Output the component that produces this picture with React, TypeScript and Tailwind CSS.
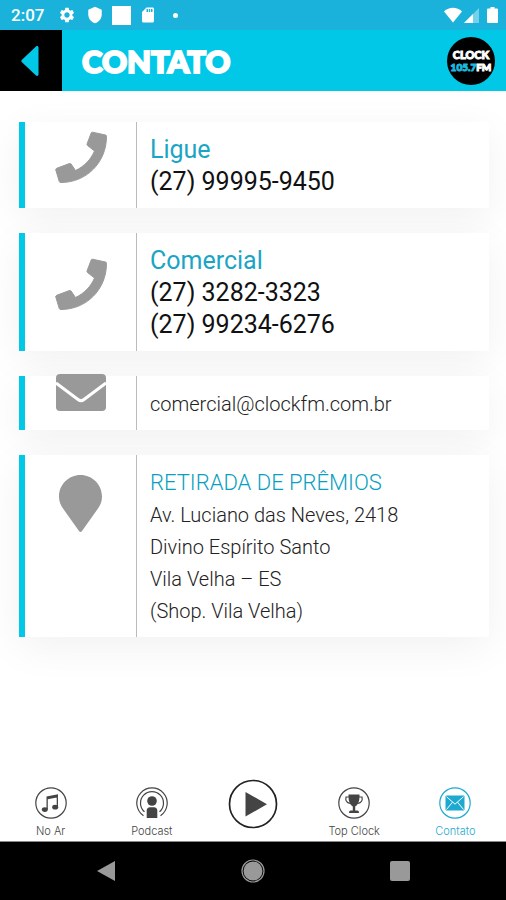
import type { ReactNode } from "react";
import { MdSdCard, MdSettings, MdShield } from "react-icons/md";

const StatusBar = () => (
  <div className="flex h-[30px] items-center justify-between bg-[#1ab2da] pr-2 pl-[11px] text-white">
    <div className="flex items-center">
      <span className="w-[47px] text-[17px] leading-5 font-medium">2:07</span>
      <MdSettings className="mr-2.5 size-[18px]" />
      <MdShield className="mr-2 size-[18px]" />
      <span className="mr-2 size-[19px] bg-white" />
      <MdSdCard className="mr-4 size-[18px]" />
      <span className="size-[5px] rounded-full bg-white" />
    </div>
    <div className="flex items-center">
      <svg className="mr-0.5 h-4 w-[18px]" viewBox="0 0 18 16" fill="currentColor">
        <path d="M0 4.500C5 -.5 13 -.5 18 4.500L9 15.500z" />
      </svg>
      <svg className="mr-2 size-[15px]" viewBox="0 0 15 15" fill="currentColor">
        <path d="M15 0V15H0z" opacity=".4" />
        <path d="M9 6V15H0z" />
      </svg>
      <svg className="h-4 w-[11px]" viewBox="0 0 11 16" fill="currentColor">
        <path d="M3.500 0h4v1.600H10a1 1 0 0 1 1 1V15a1 1 0 0 1-1 1H1a1 1 0 0 1-1-1V2.600a1 1 0 0 1 1-1h2.500z" />
      </svg>
    </div>
  </div>
);

const Logo = () => (
  <div className="flex size-12 flex-col items-center justify-center rounded-full bg-black font-[Lato,sans-serif] font-black text-white">
    <span className="text-[11px] leading-3 [-webkit-text-stroke:1px]">CLOCK</span>
    <span className="flex text-[10px] leading-3 [-webkit-text-stroke:1px]">
      <span className="text-[#1bb8dc]">105.7</span>
      <span>FM</span>
    </span>
  </div>
);

const Header = () => (
  <header className="flex h-[61px] items-center bg-[#02c8e8] pr-[11px]">
    <button
      aria-label="Voltar"
      className="flex h-full w-[62px] items-center justify-center bg-black text-[#02c8e8]"
    >
      <svg className="h-8 w-5" viewBox="0 0 20 32" fill="currentColor">
        <path d="M1 14.700L15 1.500c1-1 2.500-.3 2.500 1.200v26.600c0 1.500-1.500 2.200-2.500 1.200L1 17.300c-.9-.8-.9-1.800 0-2.600z" />
      </svg>
    </button>
    <h1 className="flex-1 pl-5 font-[Lato,sans-serif] text-[31px] leading-8 font-black text-white [-webkit-text-stroke:2px]">
      CONTATO
    </h1>
    <Logo />
  </header>
);

const PhoneIcon = () => (
  <svg
    className="size-[52px]"
    viewBox="0 0 52 52"
    fill="currentColor"
    stroke="currentColor"
    strokeWidth="1"
    strokeLinejoin="round"
  >
    <path d="M37.500 1.200L50.500 4q1 .2 1 1.300C51.500 32 31 51.500 6 51.500q-1.500 0-1.800-1.200L.8 39q-.3-1.200.9-1.700L14.500 32.500q1-.4 1.600.5L20.500 39.500C29 35.500 36 28.500 39.500 20L32.500 14.500q-.8-.7-.4-1.700L36.200 2q.4-1 1.300-.8z" />
  </svg>
);

const EnvelopeIcon = () => (
  <svg className="h-[37px] w-[50px] overflow-visible" viewBox="0 3 50 37">
    <rect width="50" height="37" rx="4" fill="currentColor" />
    <path
      d="M0 9L22 25.500q3 2.400 6 0L50 9"
      fill="none"
      stroke="#fff"
      strokeWidth="3"
    />
  </svg>
);

const PinIcon = () => (
  <svg className="h-[57px] w-[43px]" viewBox="0 0 43 57" fill="currentColor">
    <path d="M21.500 0C33.400 0 43 9.600 43 21.500c0 5-1.500 8.500-4 12L23 56q-1.500 2-3 0L4 33.500c-2.500-3.500-4-7-4-12C0 9.600 9.600 0 21.500 0z" />
  </svg>
);

type CardProps = {
  icon: ReactNode;
  top?: boolean;
  children: ReactNode;
};

const Card = ({ icon, top, children }: CardProps) => (
  <section className="flex border-l-6 border-[#02c8e8] bg-white">
    <div
      className={
        top
          ? "flex w-[112px] justify-center border-r border-[#bbb] pt-5 text-[#999]"
          : "flex w-[112px] items-center justify-center border-r border-[#bbb] pb-4 text-[#999]"
      }
    >
      {icon}
    </div>
    <div className="flex-1 pt-3 pb-2.5 pl-[13px] leading-8">{children}</div>
  </section>
);

const Shadow = ({ children }: { children: ReactNode }) => (
  <div className="shadow-[0_10px_40px_rgba(0,0,0,0.06)]">{children}</div>
);

const TabItem = ({
  label,
  active,
  children,
}: {
  label: string;
  active?: boolean;
  children: ReactNode;
}) => (
  <button
    className={
      active
        ? "flex flex-col items-center text-[#1ea9d0]"
        : "flex flex-col items-center text-[#444]"
    }
  >
    <svg className="size-8" viewBox="0 0 32 32" fill="currentColor">
      {children}
    </svg>
    <span className="mt-1 font-[Inter,sans-serif] text-[11px] leading-4 font-light">
      {label}
    </span>
  </button>
);

const Ring = () => (
  <circle cx="16" cy="16" r="15.200" fill="none" stroke="currentColor" strokeWidth="1.200" />
);

const TabBar = () => (
  <nav className="grid grid-cols-5 items-end border-b border-[#888] pb-0.5">
    <TabItem label="No Ar">
      <Ring />
      <path d="M11.500 9.500L23 7.200v3L12.800 12.300v10.200h-1.300zM21.700 8.500H23v11.500h-1.300z" />
      <ellipse cx="9.800" cy="22.600" rx="3" ry="2.400" />
      <ellipse cx="20.200" cy="20.200" rx="3" ry="2.400" />
    </TabItem>
    <TabItem label="Podcast">
      <g fill="none" stroke="currentColor" strokeWidth="1.200">
        <path d="M7.500 28.700A15.200 15.200 0 1 1 24.500 28.700" />
        <path d="M8.500 24.800A11.500 11.500 0 1 1 23.500 24.800" />
      </g>
      <circle cx="16" cy="14" r="4.800" />
      <path d="M10.700 31v-7.500c0-2 1.200-3.300 3.300-3.300h4c2.100 0 3.300 1.300 3.300 3.300V31z" />
    </TabItem>
    <button aria-label="Tocar" className="mb-2.5 flex justify-center text-[#222]">
      <svg className="size-[50px]" viewBox="0 0 50 50">
        <circle cx="25" cy="25" r="23.500" fill="none" stroke="currentColor" strokeWidth="1.700" />
        <path d="M17.500 13v24.500L39 25.200z" fill="#444" />
      </svg>
    </button>
    <TabItem label="Top Clock">
      <Ring />
      <path d="M10.500 7.500h11v2c0 5-1.500 8.500-4.300 10v4h2.300c1 0 1.500 1 1.500 2.500H11c0-1.500.5-2.500 1.500-2.500h2.300v-4c-2.800-1.500-4.300-5-4.300-10z" />
      <path
        d="M11 10H8c-1 4 1.500 6 4.500 6.500M21 10h3c1 4-1.500 6-4.500 6.500"
        fill="none"
        stroke="currentColor"
        strokeWidth="1.200"
      />
    </TabItem>
    <TabItem label="Contato" active>
      <Ring />
      <rect x="6.500" y="8.500" width="19" height="15" rx="1" />
      <path
        d="M7.500 9.700L16 17.200l8.500-7.500M7.500 22.500l6-7.300M24.500 22.500l-6-7.300"
        fill="none"
        stroke="#fff"
        strokeWidth="1"
      />
    </TabItem>
  </nav>
);

const SystemBar = () => (
  <div className="flex h-[58px] items-center justify-between bg-black px-[82px] text-[#999]">
    <button aria-label="Voltar ao app anterior" className="flex w-12 justify-center">
      <svg className="size-5" viewBox="0 0 20 20" fill="currentColor">
        <path d="M19 0v20L1 10z" />
      </svg>
    </button>
    <button aria-label="Início" className="flex w-12 justify-center">
      <svg className="size-6" viewBox="0 0 24 24">
        <circle cx="12" cy="12" r="9.500" fill="currentColor" />
        <circle cx="12" cy="12" r="11" fill="none" stroke="currentColor" strokeWidth="1.200" />
      </svg>
    </button>
    <button aria-label="Recentes" className="flex w-12 justify-center">
      <span className="size-5 rounded-xs bg-[#999]" />
    </button>
  </div>
);

export default function App() {
  return (
    <div className="flex min-h-screen flex-col bg-white font-[Roboto,sans-serif]">
      <StatusBar />
      <Header />
      <main className="flex flex-1 flex-col gap-[25px] pt-[31px] pr-[17px] pl-[19px]">
        <Shadow>
          <Card icon={<PhoneIcon />}>
            <h2 className="text-[25px] leading-8 text-[#1ba5c4]">Ligue</h2>
            <a href="tel:27999959450" className="block text-[25px] leading-8 text-[#111]">
              (27) 99995-9450
            </a>
          </Card>
        </Shadow>
        <Shadow>
          <Card icon={<PhoneIcon />}>
            <h2 className="text-[25px] leading-8 text-[#1ba5c4]">Comercial</h2>
            <a href="tel:2732823323" className="block text-[25px] leading-8 text-[#111]">
              (27) 3282-3323
            </a>
            <a href="tel:27992346276" className="block text-[25px] leading-8 text-[#111]">
              (27) 99234-6276
            </a>
          </Card>
        </Shadow>
        <Shadow>
          <Card icon={<EnvelopeIcon />}>
            <a
              href="mailto:comercial@clockfm.com.br"
              className="block text-xl leading-8 font-light text-[#222]"
            >
              comercial@clockfm.com.br
            </a>
          </Card>
        </Shadow>
        <Shadow>
          <Card icon={<PinIcon />} top>
            <h2 className="text-[22px] leading-8 font-light text-[#0a9fc0]">
              RETIRADA DE PRÊMIOS
            </h2>
            <address className="text-xl leading-8 font-light text-[#222] not-italic">
              Av. Luciano das Neves, 2418
              <br />
              Divino Espírito Santo
              <br />
              Vila Velha – ES
              <br />
              (Shop. Vila Velha)
            </address>
          </Card>
        </Shadow>
      </main>
      <TabBar />
      <SystemBar />
    </div>
  );
}
